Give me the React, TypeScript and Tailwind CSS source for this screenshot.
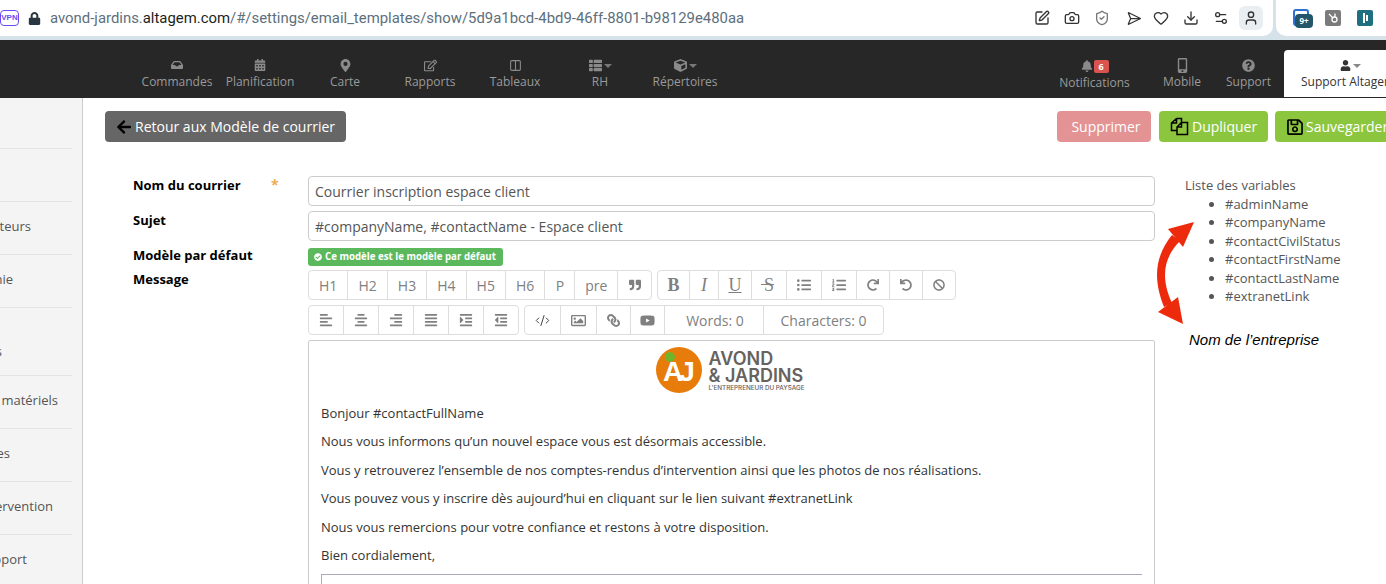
import React from "react";
import {
  FaAlignCenter,
  FaAlignJustify,
  FaAlignLeft,
  FaAlignRight,
  FaArrowLeft,
  FaBan,
  FaBell,
  FaCalendarAlt,
  FaCheckCircle,
  FaCube,
  FaInbox,
  FaIndent,
  FaLink,
  FaListOl,
  FaListUl,
  FaLock,
  FaMapMarkerAlt,
  FaMobileAlt,
  FaOutdent,
  FaQuestionCircle,
  FaQuoteRight,
  FaRedo,
  FaRegEdit,
  FaRegImage,
  FaRegSave,
  FaThList,
  FaUndo,
  FaUser,
  FaYoutube,
} from "react-icons/fa";
import { Camera, CodeXml, Columns2, Download, Heart, Send, Settings2, ShieldCheck, SquarePen, User } from "lucide-react";

const NavItem = ({ icon, label, width, caret }: { icon: React.ReactNode; label: string; width: string; caret?: boolean }) => (
  <div className={`flex flex-col items-center ${width}`}>
    <div className="flex items-center h-[16px] text-[#8a8a8a]">
      {icon}
      {caret && <span className="ml-[2px] mt-[2px] border-x-[4px] border-t-[4px] border-x-transparent border-t-[#777]" />}
    </div>
    <span className="text-[12px] leading-[18px] text-[#9a9a9a] whitespace-nowrap">{label}</span>
  </div>
);

const SideRow = ({ label, w, h }: { label: string; w: string; h: string }) => (
  <div className={`border-b border-[#e3e3e3] flex items-center overflow-hidden ${h}`}>
    <div className={`flex justify-end overflow-hidden ${w}`}>
      <span className="whitespace-nowrap shrink-0 text-[13px] text-[#555]">{label}</span>
    </div>
  </div>
);

const Tool = ({ children, w }: { children: React.ReactNode; w: string }) => (
  <div className={`h-full flex items-center justify-center border-r border-[#ddd] last:border-r-0 text-[14px] text-[#808080] ${w}`}>
    {children}
  </div>
);

const Group = ({ children }: { children: React.ReactNode }) => (
  <div className="flex h-[30px] border border-[#ddd] rounded-[4px] bg-white">{children}</div>
);

const Serif = ({ children, className }: { children: React.ReactNode; className: string }) => (
  <span className={`font-['Liberation_Serif',serif] text-[18px] leading-none ${className}`}>{children}</span>
);

const App = () => {
  return (
    <div className="w-[1386px] h-[584px] overflow-hidden bg-white font-['Open_Sans',sans-serif] flex flex-col">
      {/* browser bar */}
      <div className="h-[40px] shrink-0 bg-[#d6e2ea]">
        <div className="h-[36px] flex items-center">
          <div className="flex-1 h-full bg-white rounded-br-[10px] flex items-center min-w-0">
            <span className="w-[19px] h-[16px] border border-[#6a4cf0] rounded-[4px] text-[8px] leading-[14px] font-bold text-[#6a4cf0] text-center font-['Liberation_Sans',sans-serif]">VPN</span>
            <FaLock size={13} className="ml-[9px] text-[#2b3740]" />
            <span className="ml-[9px] text-[14.9px] text-[#5d6f7c] font-['Roboto',sans-serif] whitespace-nowrap">
              avond-jardins.<span className="text-[#1b1f22]">altagem.com</span>/#/settings/email_templates/show/5d9a1bcd-4bd9-46ff-8801-b98129e480aa
            </span>
            <div className="ml-auto flex items-center gap-[14px] pr-[10px] text-[#333]">
              <SquarePen size={16} />
              <Camera size={16} />
              <ShieldCheck size={16} className="text-[#777]" />
              <Send size={15} className="rotate-45" />
              <Heart size={16} />
              <Download size={16} />
              <Settings2 size={16} />
              <div className="w-[24px] h-[24px] ml-[-4px] rounded-[6px] bg-[#e8eef2] flex items-center justify-center">
                <User size={16} />
              </div>
            </div>
          </div>
          <div className="w-[110px] ml-[3px] h-full bg-white rounded-bl-[10px] flex items-center gap-[16px] pl-[17px]">
            <div className="relative w-[16px] h-[17px] rounded-[3px] border-2 border-[#2f6fd6] mt-[-2px]">
              <span className="absolute left-[0px] top-[3px] w-[18px] h-[14px] rounded-[4px] bg-[#24566b] text-white text-[8px] leading-[14px] font-bold text-center">9+</span>
            </div>
            <div className="w-[16px] h-[16px] rounded-[2px] bg-[#7b7b7b] flex items-center justify-center">
              <svg width="12" height="12" viewBox="0 0 12 12" fill="none" stroke="#fff" strokeWidth="1.3">
                <circle cx="7.5" cy="7.5" r="2.5" />
                <path d="M5.5 5.5 L2 2 M8 5 V1.5" />
              </svg>
            </div>
            <div className="w-[16px] h-[16px] rounded-[2px] bg-[#1f6f80] flex items-center justify-center gap-[1px]">
              <span className="w-[2px] h-[10px] bg-white" />
              <span className="w-[2px] h-[6px] bg-white" />
            </div>
          </div>
        </div>
      </div>

      {/* nav */}
      <div className="h-[58px] shrink-0 bg-[#272727] flex">
        <div className="flex ml-[134px] pt-[17px]">
          <NavItem width="w-[86px]" label="Commandes" icon={<FaInbox size={12} />} />
          <NavItem width="w-[80px]" label="Planification" icon={<FaCalendarAlt size={12} />} />
          <NavItem width="w-[90px]" label="Carte" icon={<FaMapMarkerAlt size={13} />} />
          <NavItem width="w-[80px]" label="Rapports" icon={<FaRegEdit size={13} />} />
          <NavItem width="w-[90px]" label="Tableaux" icon={<Columns2 size={13} />} />
          <NavItem width="w-[80px]" label="RH" caret icon={<FaThList size={13} />} />
          <NavItem width="w-[90px]" label="Répertoires" caret icon={<FaCube size={13} />} />
        </div>
        <div className="ml-auto flex h-full pt-[17px]">
          <div className="flex flex-col items-center w-[113px]">
            <div className="flex items-center h-[18px] text-[#8a8a8a]">
              <FaBell size={12} />
              <span className="ml-[1px] w-[15px] h-[13px] rounded-[2px] bg-[#d9534f] text-white text-[9px] leading-[13px] font-bold text-center">6</span>
            </div>
            <span className="text-[12px] leading-[18px] mt-[-1px] text-[#9a9a9a]">Notifications</span>
          </div>
          <NavItem width="w-[62px]" label="Mobile" icon={<FaMobileAlt size={15} />} />
          <NavItem width="w-[71px]" label="Support" icon={<FaQuestionCircle size={13} />} />
          <div className="w-[102px] h-[48px] mt-[-7px] rounded-tl-[4px] bg-white flex flex-col overflow-hidden border-b border-[#272727]">
            <div className="flex items-center h-[16px] mt-[7px] text-[#333] pl-[56px]">
              <FaUser size={11} />
              <span className="ml-[2px] mt-[2px] border-x-[4px] border-t-[4px] border-x-transparent border-t-[#888]" />
            </div>
            <span className="text-[12px] leading-[18px] text-[#333] whitespace-nowrap pl-[17px]">Support Altagem</span>
          </div>
        </div>
      </div>

      <div className="flex-1 flex min-h-0">
        {/* sidebar */}
        <div className="w-[83px] shrink-0 bg-[#f4f4f4] border-r border-[#ccc] pr-[10px]">
          <div className="h-[51px] border-b border-[#e3e3e3]" />
          <div className="h-[53px] border-b border-[#e3e3e3]" />
          <SideRow h="h-[53px] pb-[2px]" w="w-[31px]" label="Opérateurs" />
          <SideRow h="h-[53px] pb-[2px]" w="w-[13px]" label="Compagnie" />
          <SideRow h="h-[68px] pt-[21px]" w="w-[2px]" label="Clients" />
          <SideRow h="h-[53px] pb-[2px]" w="w-[58px]" label="matériels" />
          <SideRow h="h-[53px] pb-[2px]" w="w-[10px]" label="Modèles" />
          <SideRow h="h-[53px] pb-[2px]" w="w-[53px]" label="Intervention" />
          <SideRow h="h-[53px] pb-[2px]" w="w-[27px]" label="Rapport" />
        </div>

        {/* main */}
        <div className="flex-1 min-w-0 pl-[22px] pt-[13px]">
          <div className="flex items-center">
            <button className="h-[31px] w-[241px] rounded-[4px] bg-[#666] text-white text-[14px] flex items-center pl-[11px] whitespace-nowrap">
              <FaArrowLeft size={16} className="text-black mr-[3px]" />
              Retour aux Modèle de courrier
            </button>
            <button className="ml-auto h-[31px] w-[94px] pl-[4px] shrink-0 rounded-[4px] bg-[#e39393] text-white text-[14px]">Supprimer</button>
            <button className="ml-[8px] h-[31px] w-[109px] shrink-0 rounded-[4px] bg-[#8cc63f] text-white text-[14px] flex items-center pl-[11px]">
              <svg width="19" height="19" viewBox="0 0 19 19" fill="none" stroke="#000" strokeWidth="1.5" className="mr-[3px]">
                <path d="M6.5 1.5 H11.5 V5.5 M6.5 1.5 L1.5 6 V13.5 H7 M6.5 1.5 V6 H1.5" />
                <path d="M11.5 5.5 H17.5 V17.5 H7 V10 Z M11.5 5.5 V10 H7" />
              </svg>
              Dupliquer
            </button>
            <button className="ml-[7px] mr-[-40px] h-[31px] w-[151px] shrink-0 rounded-[4px] bg-[#8cc63f] text-white text-[14px] flex items-center pl-[11px]">
              <FaRegSave size={18} className="text-black mr-[2px]" />
              Sauvegarder
            </button>
          </div>

          <div className="flex mt-[34px]">
            <div className="w-[203px] shrink-0 pl-[28px] text-[13px] font-bold text-black">
              <div className="h-[35px] relative">
                Nom du courrier
                <span className="absolute left-[138px] top-[-2px] text-[#f0ad4e] text-[14px]">*</span>
              </div>
              <div className="h-[35px]">Sujet</div>
              <div className="h-[24px]">Modèle par défaut</div>
              <div>Message</div>
            </div>

            <div className="w-[847px] shrink-0 flex flex-col">
              <div className="h-[30px] border border-[#ccc] rounded-[4px] px-[6px] flex items-center text-[14px] text-[#555]">Courrier inscription espace client</div>
              <div className="h-[30px] mt-[5px] border border-[#ccc] rounded-[4px] px-[6px] flex items-center text-[14px] text-[#555]">#companyName, #contactName - Espace client</div>
              <div className="mt-[7px] h-[18px] w-[195px] rounded-[3px] bg-[#5cb85c] text-white text-[9.7px] font-bold flex items-center pl-[6px] whitespace-nowrap">
                <FaCheckCircle size={8} className="mr-[3px]" />
                Ce modèle est le modèle par défaut
              </div>

              <div className="flex gap-[5px] mt-[4px]">
                <Group>
                  {["H1", "H2", "H3", "H4", "H5", "H6"].map((h) => (
                    <Tool key={h} w="w-[39.4px]">{h}</Tool>
                  ))}
                  <Tool w="w-[30px]">P</Tool>
                  <Tool w="w-[43px]">pre</Tool>
                  <Tool w="w-[32.6px]"><FaQuoteRight size={12} /></Tool>
                </Group>
                <Group>
                  <Tool w="w-[32px]"><Serif className="font-bold">B</Serif></Tool>
                  <Tool w="w-[29px]"><Serif className="italic">I</Serif></Tool>
                  <Tool w="w-[33px]"><Serif className="underline">U</Serif></Tool>
                  <Tool w="w-[35px]">
                    <div className="relative">
                      <Serif className="">S</Serif>
                      <span className="absolute left-[-3px] top-[9px] w-[13px] h-[1px] bg-[#808080]" />
                    </div>
                  </Tool>
                  <Tool w="w-[35px]"><FaListUl size={14} /></Tool>
                  <Tool w="w-[35px]"><FaListOl size={14} /></Tool>
                  <Tool w="w-[33px]"><FaRedo size={12} /></Tool>
                  <Tool w="w-[33px]"><FaUndo size={12} /></Tool>
                  <Tool w="w-[32px]"><FaBan size={12} /></Tool>
                </Group>
              </div>
              <div className="flex gap-[5px] mt-[5px]">
                <Group>
                  <Tool w="w-[35px]"><FaAlignLeft size={14} /></Tool>
                  <Tool w="w-[35px]"><FaAlignCenter size={14} /></Tool>
                  <Tool w="w-[35px]"><FaAlignRight size={14} /></Tool>
                  <Tool w="w-[35px]"><FaAlignJustify size={14} /></Tool>
                  <Tool w="w-[35px]"><FaIndent size={14} /></Tool>
                  <Tool w="w-[34px]"><FaOutdent size={14} /></Tool>
                </Group>
                <Group>
                  <Tool w="w-[36px]"><CodeXml size={15} strokeWidth={1.6} className="text-[#444]" /></Tool>
                  <Tool w="w-[36px]"><FaRegImage size={15} /></Tool>
                  <Tool w="w-[34px]"><FaLink size={13} className="-scale-x-100" /></Tool>
                  <Tool w="w-[34px]"><FaYoutube size={15} /></Tool>
                  <Tool w="w-[99px] pl-[2px]">Words: 0</Tool>
                  <Tool w="w-[119px]">Characters: 0</Tool>
                </Group>
              </div>

              <div className="mt-[5px] h-[300px] border border-[#ccc] rounded-[2px] px-[12px] text-[13px] text-[#333]">
                <div className="flex justify-center h-[58px] items-center gap-[7px] pr-[3px]">
                  <div className="relative w-[46px] h-[46px] rounded-full bg-[#e87c0a] flex items-center justify-center text-white font-bold text-[28px] tracking-[-4px] leading-none font-['Liberation_Sans',sans-serif]">
                    <span className="mt-[3px] mr-[3px]">AJ</span>
                    <span className="absolute left-[9px] top-[5px] w-[10px] h-[10px] rounded-full bg-[#6fb52c]" />
                  </div>
                  <div className="text-[#66625e] font-semibold font-['Inter',sans-serif] pt-[3px]">
                    <div className="text-[18px] leading-[17px] whitespace-nowrap">AVOND</div>
                    <div className="text-[18px] leading-[17px] whitespace-nowrap">&amp; JARDINS</div>
                    <div className="text-[6.3px] leading-[9px] whitespace-nowrap font-medium">L'ENTREPRENEUR DU PAYSAGE</div>
                  </div>
                </div>
                <p className="mt-[5px] leading-[18px]">Bonjour #contactFullName</p>
                <p className="mt-[10px] leading-[18px]">Nous vous informons qu’un nouvel espace vous est désormais accessible.</p>
                <p className="mt-[11px] leading-[18px]">Vous y retrouverez l’ensemble de nos comptes-rendus d’intervention ainsi que les photos de nos réalisations.</p>
                <p className="mt-[10px] leading-[18px]">Vous pouvez vous y inscrire dès aujourd’hui en cliquant sur le lien suivant #extranetLink</p>
                <p className="mt-[11px] leading-[18px]">Nous vous remercions pour votre confiance et restons à votre disposition.</p>
                <p className="mt-[10px] leading-[18px]">Bien cordialement,</p>
                <div className="mt-[10px] h-[20px] border-t border-l border-[#aab]" />
              </div>
            </div>

            <div className="ml-[30px] text-[13px] text-[#555] relative">
              <div className="leading-[18px]">Liste des variables</div>
              <ul className="list-disc pl-[40px] pt-[0.6px] leading-[18.5px]">
                <li>#adminName</li>
                <li>#companyName</li>
                <li>#contactCivilStatus</li>
                <li>#contactFirstName</li>
                <li>#contactLastName</li>
                <li>#extranetLink</li>
              </ul>
              <svg className="absolute left-[-35px] top-[39px]" width="50" height="115" viewBox="0 0 50 115">
                <path d="M22 20 C6 40 2 62 14 92 L22 88 C10 62 14 42 30 26 Z" fill="#ee2a0c" />
                <path d="M44 7 L18 14 L33 32 Z" fill="#ee2a0c" />
                <path d="M33 109 L8 97 L28 82 Z" fill="#ee2a0c" />
              </svg>
              <div className="mt-[23px] ml-[4px] text-[15px] italic text-black font-['Liberation_Sans',sans-serif] whitespace-nowrap">Nom de l’entreprise</div>
            </div>
          </div>
        </div>
      </div>
    </div>
  );
};

export default App;
